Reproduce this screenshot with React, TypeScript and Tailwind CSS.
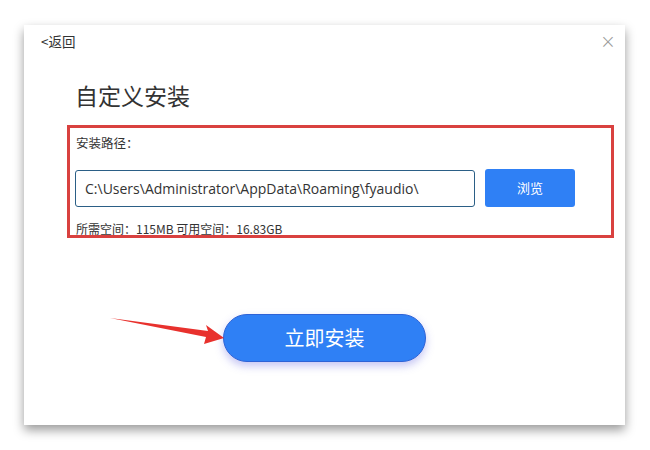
import React from "react";

export default function App() {
  const cjk = '"Noto Sans CJK SC", "Open Sans", sans-serif';
  const latin = '"Open Sans", "Noto Sans CJK SC", sans-serif';
  return (
    <div className="w-[650px] h-[450px] bg-white relative overflow-hidden" style={{ fontFamily: cjk }}>
      <div className="absolute left-[24px] top-[25px] w-[601px] h-[400px] bg-white shadow-[0_5px_10px_rgba(0,0,0,0.4)] flex flex-col">
        <div className="flex items-center justify-between pl-[17px] pr-[9px] pt-[7px] h-[26px]">
          <span className="text-[13.5px] leading-none text-[#333]">&lt;返回</span>
          <span className="text-[19px] leading-none text-[#999] font-light" style={{ fontFamily: '"DejaVu Sans", sans-serif' }}>×</span>
        </div>
        <div className="pl-[51px] mt-[28px] text-[23px] leading-[32px] text-[#333]">自定义安装</div>
        <div className="ml-[43px] mt-[14px] w-[547px] h-[113px] border-[3px] border-[#d9413f] flex flex-col overflow-hidden">
          <div className="pl-[6px] pt-[7px] text-[12.5px] leading-[16px] text-[#333]">安装路径：</div>
          <div className="flex items-center mt-[18px] pl-[5px]">
            <div className="w-[400px] h-[37px] border border-[#2b5f86] rounded-[3px] flex items-center pl-[9px] text-[14px] text-[#333]" style={{ fontFamily: latin }}>
              C:\Users\Administrator\AppData\Roaming\fyaudio\
            </div>
            <div className="ml-[10px] w-[90px] h-[38px] rounded-[3px] bg-[#2f80f5] flex items-center justify-center text-[13px] text-white">浏览</div>
          </div>
          <div className="pl-[6px] mt-[15px] text-[12px] leading-[14px] text-[#333]">所需空间：115MB 可用空间：16.83GB</div>
        </div>
        <div className="ml-[199px] mt-[76px] w-[203px] h-[48px] rounded-full bg-[#2f80f5] border border-[#2e63d6] shadow-[0_4px_8px_rgba(90,90,220,0.35)] flex items-center justify-center text-[20px] text-white">
          立即安装
        </div>
      </div>
      <svg className="absolute left-0 top-0" width="650" height="450" viewBox="0 0 650 450">
        <polygon points="110,318 208,331 206,325 224,338 204,344 206,337" fill="#e8312d" />
      </svg>
    </div>
  );
}
